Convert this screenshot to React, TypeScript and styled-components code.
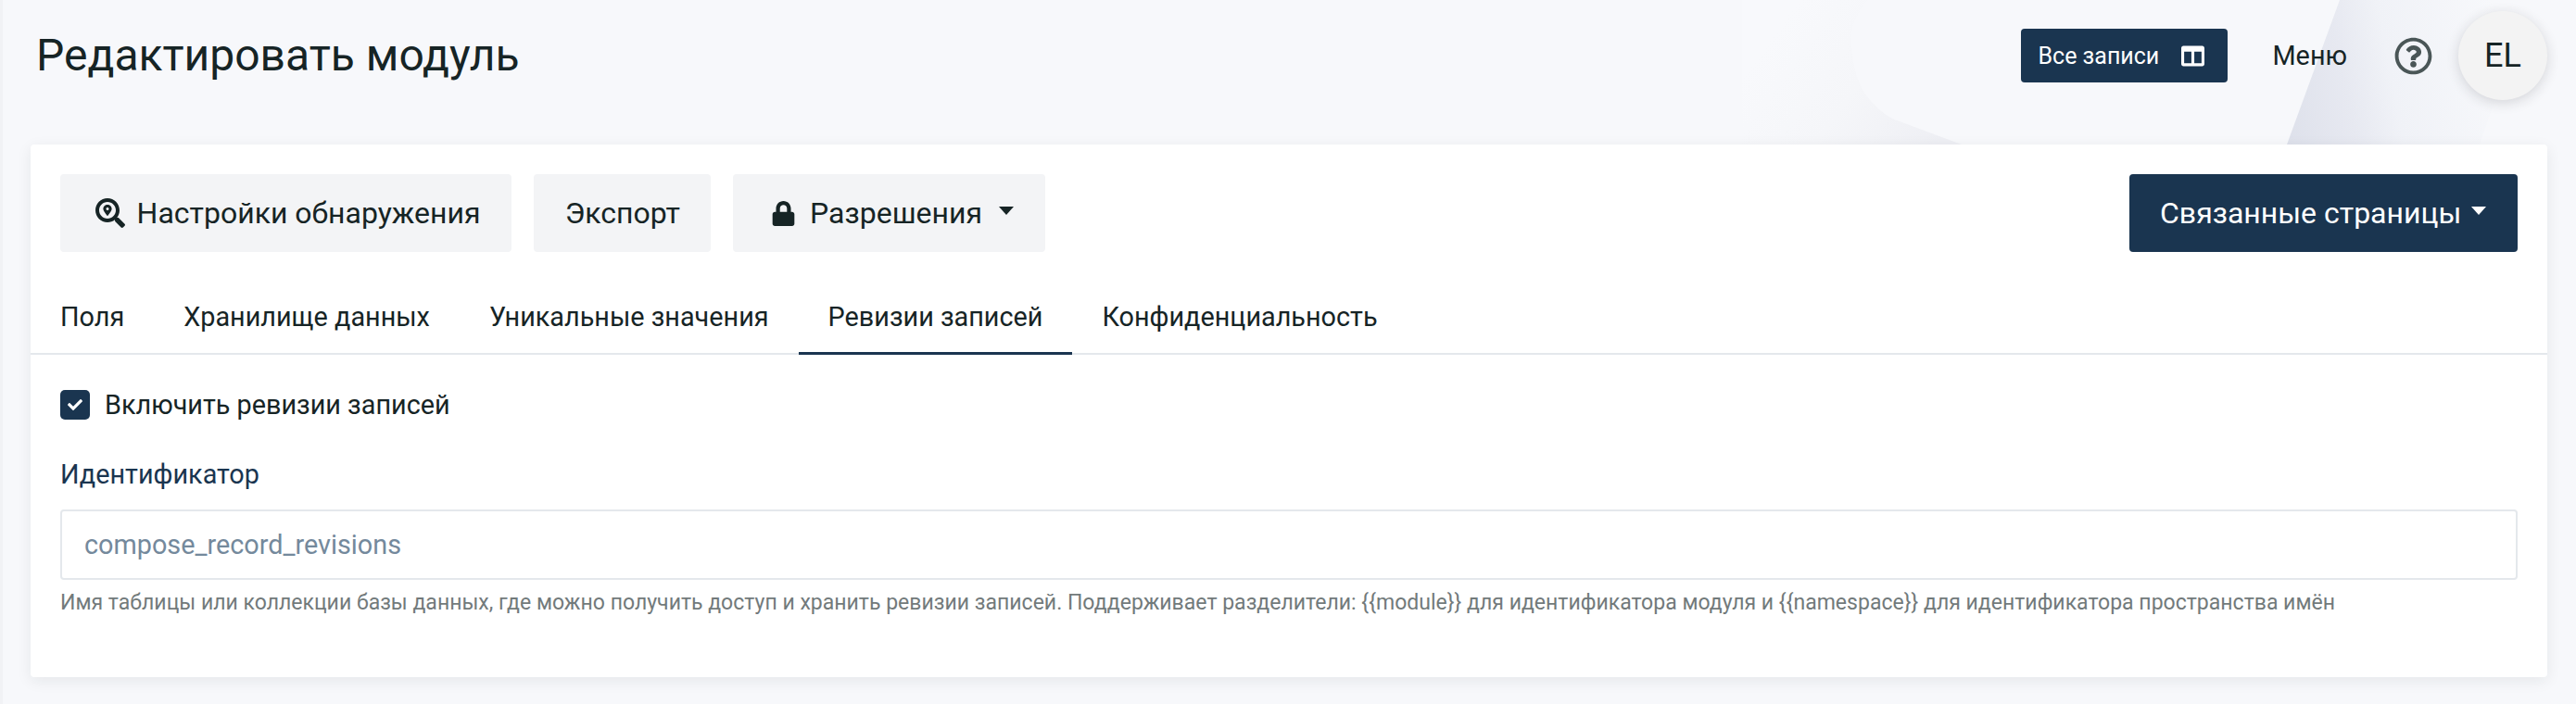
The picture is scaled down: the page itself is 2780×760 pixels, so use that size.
import styled, { createGlobalStyle } from 'styled-components'
import { FaSearchLocation, FaLock, FaColumns, FaCheck, FaRegQuestionCircle } from 'react-icons/fa'

const GlobalStyle = createGlobalStyle`
  html, body {
    margin: 0;
    padding: 0;
    background: #f7f8fb;
  }

  body {
    font-family: Roboto, 'Noto Sans', sans-serif;
    color: #162425;
  }
`

const tabs = ['Поля', 'Хранилище данных', 'Уникальные значения', 'Ревизии записей', 'Конфиденциальность']

const App = () => {
  return (
    <Page>
      <GlobalStyle />
      <Backdrop viewBox="0 0 2780 156" aria-hidden="true">
        <defs>
          <linearGradient id="wedge" gradientUnits="userSpaceOnUse" x1="2470" y1="156" x2="2710" y2="110">
            <stop offset="0" stopColor="#dee1eb" />
            <stop offset="0.3" stopColor="#e7e9f1" />
            <stop offset="0.5" stopColor="#f0f2f7" />
            <stop offset="1" stopColor="#f7f8fb" />
          </linearGradient>
          <linearGradient id="swoosh" gradientUnits="userSpaceOnUse" x1="1920" y1="30" x2="2090" y2="156">
            <stop offset="0" stopColor="#f8f9fc" />
            <stop offset="0.5" stopColor="#f5f6f9" />
            <stop offset="1" stopColor="#eeeff4" />
          </linearGradient>
        </defs>
        <path
          d="M1880 0 H2015 C2005 15 1998 25 1998 40 C1998 65 2003 95 2023 113 C2033 124 2042 128 2050 131 L2117 156 H1880 Z"
          fill="url(#swoosh)"
        />
        <path d="M2525 0 H2730 L2676 156 H2468 Z" fill="url(#wedge)" />
      </Backdrop>

      <Header>
        <Title>Редактировать модуль</Title>
        <HeaderActions>
          <AllRecords>
            Все записи
            <FaColumns />
          </AllRecords>
          <MenuLink>Меню</MenuLink>
          <HelpIcon>
            <FaRegQuestionCircle />
          </HelpIcon>
          <Avatar>EL</Avatar>
        </HeaderActions>
      </Header>

      <Card>
        <Toolbar>
          <ToolGroup>
            <ToolButton>
              <ToolIcon $size={32}>
                <FaSearchLocation />
              </ToolIcon>
              Настройки обнаружения
            </ToolButton>
            <ToolButton>Экспорт</ToolButton>
            <ToolButton>
              <ToolIcon $size={27}>
                <FaLock />
              </ToolIcon>
              Разрешения
              <Caret />
            </ToolButton>
          </ToolGroup>
          <PrimaryButton>
            Связанные страницы
            <Caret />
          </PrimaryButton>
        </Toolbar>

        <TabList>
          {tabs.map((tab) => (
            <Tab key={tab} $active={tab === 'Ревизии записей'}>
              {tab}
            </Tab>
          ))}
        </TabList>

        <Body>
          <CheckRow>
            <CheckBox>
              <FaCheck />
            </CheckBox>
            Включить ревизии записей
          </CheckRow>
          <FieldLabel>Идентификатор</FieldLabel>
          <Input readOnly placeholder="compose_record_revisions" />
          <HelpText>
            Имя таблицы или коллекции базы данных, где можно получить доступ и хранить ревизии записей. Поддерживает
            разделители: {'{{module}}'} для идентификатора модуля и {'{{namespace}}'} для идентификатора пространства
            имён
          </HelpText>
        </Body>
      </Card>
    </Page>
  )
}

export default App

const Page = styled.div`
  position: relative;
  width: 2780px;
  height: 760px;
  box-sizing: border-box;
  overflow: hidden;
  border-left: 3px solid #f1f2f5;
  background: #f7f8fb;
`

const Backdrop = styled.svg`
  position: absolute;
  top: 0;
  left: -3px;
  width: 2780px;
  height: 156px;
`

const Header = styled.header`
  position: relative;
  height: 156px;
  display: flex;
  align-items: flex-start;
  justify-content: space-between;
  padding: 0 31px 0 36px;
  box-sizing: border-box;
`

const Title = styled.h1`
  margin: 0;
  padding-top: 31px;
  font-size: 48px;
  line-height: 58px;
  font-weight: 400;
  color: #162425;
`

const HeaderActions = styled.div`
  display: flex;
  align-items: center;
  height: 96px;
  margin-top: 12px;
`

const AllRecords = styled.button`
  display: flex;
  align-items: center;
  justify-content: space-between;
  width: 223px;
  height: 58px;
  padding: 0 25px 0 18px;
  box-sizing: border-box;
  border: 0;
  border-radius: 4px;
  background: #1a3550;
  color: #fff;
  font: 400 25px Roboto, sans-serif;

  svg {
    width: 25px;
    height: 25px;
  }
`

const MenuLink = styled.span`
  margin-left: 48px;
  font-size: 28.8px;
  color: #162425;
`

const HelpIcon = styled.span`
  display: flex;
  margin-left: 51px;
  color: #4a5657;

  svg {
    width: 41px;
    height: 41px;
  }
`

const Avatar = styled.div`
  display: flex;
  align-items: center;
  justify-content: center;
  width: 96px;
  height: 96px;
  margin-left: 28px;
  border-radius: 50%;
  background: #f3f3f3;
  box-shadow: 0 3px 14px rgba(30, 34, 40, 0.16);
  font-size: 36px;
  color: #162425;
`

const Card = styled.main`
  position: relative;
  width: 2716px;
  height: 575px;
  margin-left: 30px;
  border-radius: 4px;
  background: #fff;
  box-shadow: 0 4px 16px rgba(30, 34, 40, 0.08);
`

const Toolbar = styled.div`
  display: flex;
  justify-content: space-between;
  padding: 32px 32px 0;
`

const ToolGroup = styled.div`
  display: flex;
  gap: 24px;
`

const ToolButton = styled.button`
  display: flex;
  align-items: center;
  gap: 8px;
  height: 84px;
  padding: 0 33.6px;
  border: 0;
  border-radius: 4px;
  background: #f3f4f6;
  color: #162425;
  font: 400 32px Roboto, sans-serif;
`

const ToolIcon = styled.span<{ $size: number }>`
  display: flex;
  align-items: center;
  justify-content: center;
  width: 41px;

  svg {
    width: ${(props) => props.$size}px;
    height: ${(props) => props.$size}px;
  }
`

const PrimaryButton = styled.button`
  display: flex;
  align-items: center;
  gap: 1px;
  width: 419px;
  height: 84px;
  padding: 0 0 0 33px;
  box-sizing: border-box;
  border: 0;
  border-radius: 4px;
  background: #1a3550;
  color: #fff;
  font: 400 32px Roboto, sans-serif;
`

const Caret = styled.span`
  width: 0;
  height: 0;
  margin: -6px 0 0 10px;
  border-top: 9px solid currentColor;
  border-left: 8px solid transparent;
  border-right: 8px solid transparent;
`

const TabList = styled.nav`
  display: flex;
  height: 79px;
  margin-top: 32px;
  box-sizing: border-box;
  border-bottom: 2px solid #e4e8ec;
`

const Tab = styled.div<{ $active?: boolean }>`
  display: flex;
  align-items: center;
  height: 79px;
  padding: 0 32px;
  box-sizing: border-box;
  border-bottom: 3px solid ${(props) => (props.$active ? '#1a3550' : 'transparent')};
  font-size: 28.8px;
  color: #162425;
`

const Body = styled.div`
  padding: 38px 32px 0;
`

const CheckRow = styled.div`
  display: flex;
  align-items: center;
  gap: 16px;
  height: 32px;
  font-size: 28.8px;
  color: #162425;
`

const CheckBox = styled.span`
  display: flex;
  align-items: center;
  justify-content: center;
  width: 32px;
  height: 32px;
  border-radius: 5px;
  background: #1a3550;
  color: #fff;

  svg {
    width: 16px;
    height: 16px;
  }
`

const FieldLabel = styled.label`
  display: block;
  margin-top: 41px;
  font-size: 28.8px;
  line-height: 36px;
  color: #1a3550;
`

const Input = styled.input`
  display: block;
  width: 100%;
  height: 76px;
  margin-top: 20px;
  padding: 0 24px;
  box-sizing: border-box;
  border: 2px solid #e4e8ec;
  border-radius: 4px;
  background: #fff;
  font: 400 28.8px Roboto, sans-serif;
  outline: none;

  &::placeholder {
    color: #74899c;
    opacity: 1;
  }
`

const HelpText = styled.p`
  margin: 10px 0 0;
  font-size: 23.04px;
  line-height: 30px;
  color: #727a7b;
  white-space: nowrap;
`
